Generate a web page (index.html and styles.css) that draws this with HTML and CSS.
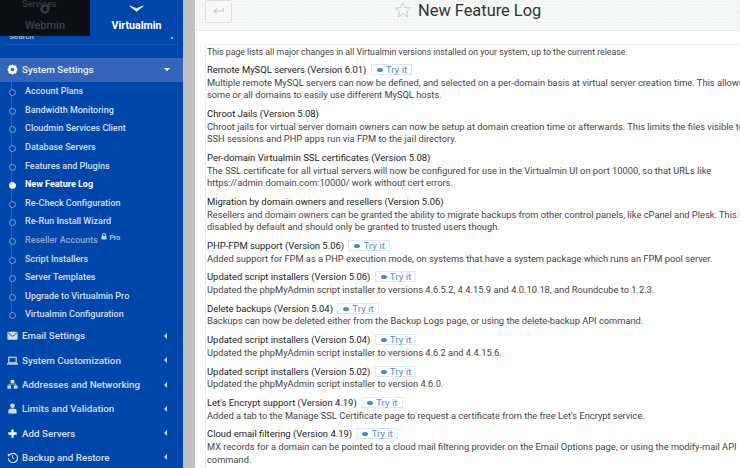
FILE: index.html
```html
<!DOCTYPE html>
<html lang="en">
<head>
<meta charset="utf-8">
<title>New Feature Log</title>
<link rel="stylesheet" href="styles.css">
</head>
<body>
<div class="page">
  <aside class="sidebar">
    <div class="switch">
      <div class="tab tab-webmin">
        <span class="ghost">Services</span>
        <svg class="gear" viewBox="0 0 24 24" width="12" height="12"><circle cx="12" cy="12" r="7" fill="none" stroke="#3a3a3a" stroke-width="5"/></svg>
        <span class="tab-label">Webmin</span>
      </div>
      <div class="tab tab-virtualmin">
        <svg viewBox="0 0 20 10" width="15" height="8"><path d="M1 1 L10 8 L19 1 L10 4.500 Z" fill="#fff" stroke="#fff" stroke-width="1"/></svg>
        <span class="tab-label">Virtualmin</span>
      </div>
    </div>
    <div class="search"><span>Search</span><i class="dot"></i></div>
    <nav class="nav">
      <div class="main active">
        <svg class="mi" viewBox="0 0 24 24"><circle cx="12" cy="12" r="7" fill="none" stroke="#fff" stroke-width="6"/><path d="M12 1v4M12 19v4M1 12h4M19 12h4M4 4l3 3M17 17l3 3M4 20l3-3M17 7l3-3" stroke="#fff" stroke-width="3"/></svg>
        <span class="ml">System Settings</span><i class="caret-down"></i>
      </div>
      <ul class="sub">
        <li>Account Plans</li>
        <li>Bandwidth Monitoring</li>
        <li>Cloudmin Services Client</li>
        <li>Database Servers</li>
        <li>Features and Plugins</li>
        <li class="current">New Feature Log</li>
        <li>Re-Check Configuration</li>
        <li>Re-Run Install Wizard</li>
        <li class="locked">Reseller Accounts <svg class="lock" viewBox="0 0 12 14" width="6" height="7"><path d="M2 6V4a4 4 0 0 1 8 0v2h1v7H1V6zm2 0h4V4a2 2 0 0 0-4 0z" fill="#c6d3ea"/></svg> <sup>Pro</sup></li>
        <li>Script Installers</li>
        <li>Server Templates</li>
        <li>Upgrade to Virtualmin Pro</li>
        <li>Virtualmin Configuration</li>
      </ul>
      <div class="main">
        <svg class="mi" viewBox="0 0 24 24"><rect x="1" y="4" width="22" height="17" rx="2" fill="#d5dff0"/><path d="M2 6l10 8 10-8" fill="none" stroke="#0047ab" stroke-width="2"/></svg>
        <span class="ml">Email Settings</span><i class="caret-left"></i>
      </div>
      <div class="main">
        <svg class="mi" viewBox="0 0 24 24"><rect x="4" y="5" width="16" height="12" fill="none" stroke="#d5dff0" stroke-width="2.500"/><rect x="0" y="18" width="24" height="3" fill="#d5dff0"/></svg>
        <span class="ml">System Customization</span><i class="caret-left"></i>
      </div>
      <div class="main">
        <svg class="mi" viewBox="0 0 24 24"><rect x="8" y="2" width="8" height="7" fill="#d5dff0"/><rect x="1" y="14" width="8" height="7" fill="#d5dff0"/><rect x="15" y="14" width="8" height="7" fill="#d5dff0"/><path d="M5 14v-3h14v3" fill="none" stroke="#d5dff0" stroke-width="1.500"/></svg>
        <span class="ml">Addresses and Networking</span><i class="caret-left"></i>
      </div>
      <div class="main">
        <svg class="mi" viewBox="0 0 24 24"><circle cx="12" cy="6" r="5" fill="#d5dff0"/><path d="M3 23v-6q0-5 9-5t9 5v6z" fill="#d5dff0"/></svg>
        <span class="ml">Limits and Validation</span><i class="caret-left"></i>
      </div>
      <div class="main">
        <svg class="mi" viewBox="0 0 24 24"><path d="M12 3v18M3 12h18" stroke="#fff" stroke-width="5"/></svg>
        <span class="ml">Add Servers</span><i class="caret-left"></i>
      </div>
      <div class="main">
        <svg class="mi" viewBox="0 0 24 24"><path d="M5 7a10 10 0 1 1-2 7" fill="none" stroke="#d5dff0" stroke-width="2.500"/><path d="M1 4l7 1-5 6z" fill="#d5dff0"/><path d="M12 7v6l4 2" fill="none" stroke="#d5dff0" stroke-width="2"/></svg>
        <span class="ml">Backup and Restore</span><i class="caret-left"></i>
      </div>
    </nav>
  </aside>
  <div class="gutter"></div>
  <main class="content">
    <header class="head">
      <button class="back" aria-label="Back">
        <svg viewBox="0 0 14 10" width="11" height="8"><path d="M13 1v4H2M5 2L1.500 5 5 8" fill="none" stroke="#c9c9c9" stroke-width="1.500"/></svg>
      </button>
      <svg class="star" viewBox="0 0 24 24" width="18" height="18"><path d="M12 2l3 6.800 7.300.7-5.500 4.900 1.600 7.200L12 17l-6.400 4.600 1.600-7.200L1.700 9.500 9 8.800z" fill="none" stroke="#c8c8c8" stroke-width="1.300"/></svg>
      <h1>New Feature Log</h1>
    </header>
    <section class="log">
      <p class="intro">This page lists all major changes in all Virtualmin versions installed on your system, up to the current release.</p>
      <div class="e"><div class="t">Remote MySQL servers (Version 6.01) <a class="try"><i class="eye"></i>Try it</a></div>
        <div>Multiple remote MySQL servers can now be defined, and selected on a per-domain basis at virtual server creation time. This allows</div>
        <div>some or all domains to easily use different MySQL hosts.</div></div>
      <div class="e"><div class="t">Chroot Jails (Version 5.08)</div>
        <div>Chroot jails for virtual server domain owners can now be setup at domain creation time or afterwards. This limits the files visible to</div>
        <div>SSH sessions and PHP apps run via FPM to the jail directory.</div></div>
      <div class="e"><div class="t">Per-domain Virtualmin SSL certificates (Version 5.08)</div>
        <div>The SSL certificate for all virtual servers will now be configured for use in the Virtualmin UI on port 10000, so that URLs like</div>
        <div>https://admin.domain.com:10000/ work without cert errors.</div></div>
      <div class="e"><div class="t">Migration by domain owners and resellers (Version 5.06)</div>
        <div>Resellers and domain owners can be granted the ability to migrate backups from other control panels, like cPanel and Plesk. This is</div>
        <div>disabled by default and should only be granted to trusted users though.</div></div>
      <div class="e"><div class="t">PHP-FPM support (Version 5.06) <a class="try"><i class="eye"></i>Try it</a></div>
        <div>Added support for FPM as a PHP execution mode, on systems that have a system package which runs an FPM pool server.</div></div>
      <div class="e"><div class="t">Updated script installers (Version 5.06) <a class="try"><i class="eye"></i>Try it</a></div>
        <div>Updated the phpMyAdmin script installer to versions 4.6.5.2, 4.4.15.9 and 4.0.10.18, and Roundcube to 1.2.3.</div></div>
      <div class="e"><div class="t">Delete backups (Version 5.04) <a class="try"><i class="eye"></i>Try it</a></div>
        <div>Backups can now be deleted either from the Backup Logs page, or using the delete-backup API command.</div></div>
      <div class="e"><div class="t">Updated script installers (Version 5.04) <a class="try"><i class="eye"></i>Try it</a></div>
        <div>Updated the phpMyAdmin script installer to versions 4.6.2 and 4.4.15.6.</div></div>
      <div class="e"><div class="t">Updated script installers (Version 5.02) <a class="try"><i class="eye"></i>Try it</a></div>
        <div>Updated the phpMyAdmin script installer to version 4.6.0.</div></div>
      <div class="e"><div class="t">Let's Encrypt support (Version 4.19) <a class="try"><i class="eye"></i>Try it</a></div>
        <div>Added a tab to the Manage SSL Certificate page to request a certificate from the free Let's Encrypt service.</div></div>
      <div class="e"><div class="t">Cloud email filtering (Version 4.19) <a class="try"><i class="eye"></i>Try it</a></div>
        <div>MX records for a domain can be pointed to a cloud mail filtering provider on the Email Options page, or using the modify-mail API</div>
        <div>command.</div></div>
    </section>
  </main>
</div>
</body>
</html>
```
FILE: styles.css
```css
* { box-sizing: border-box; }
html, body { margin: 0; height: 100%; overflow: hidden; background: #fff; }
body { font-family: Roboto, "Liberation Sans", sans-serif; }
.page { display: flex; width: 740px; height: 468px; overflow: hidden; }

.sidebar { position: relative; width: 183px; flex: none; background: #0047ab; color: #d5dff0; font-size: 9.500px; font-weight: 500; }
.gutter { width: 12px; flex: none; background: #bfc0bf; }

.switch { display: flex; height: 36px; }
.tab { display: flex; flex-direction: column; align-items: center; width: 90px; position: relative; }
.tab-webmin { background: #0c0f14; color: #3e4247; padding-top: 3px; gap: 2px; }
.tab-virtualmin { width: 93px; color: #fff; padding-top: 5px; gap: 6px; font-weight: 700; }
.tab-label { font-size: 10.600px; line-height: 13px; }
.tab-webmin .tab-label { margin-top: 2px; font-weight: 500; font-size: 11px; }
.ghost { position: absolute; left: 22px; top: 0; font-size: 9px; line-height: 9px; color: #33373c; }
.gear { margin-top: 0; position: relative; }

.search { height: 9px; margin: 0 5px; border-bottom: 1px solid #0f5cc0; display: flex; justify-content: space-between; padding: 0 5px 0 4px; font-size: 8px; line-height: 1; color: #aebfdc; overflow: hidden; }
.search span { margin-top: -3px; }
.dot { width: 2px; height: 2px; background: #9db3d8; margin-top: 1px; margin-right: 0; }

.nav { margin-top: 12.500px; }
.main { display: flex; align-items: center; height: 24.300px; padding: 0 15px 0 7px; font-size: 9.800px; color: #d5dff0; }
.main.active { background: #3465b9; color: #e9eef8; padding-right: 13px; }
.mi { width: 11px; height: 11px; flex: none; margin-right: 4px; }
.ml { flex: 1; }
.caret-down { width: 0; height: 0; border: 3px solid transparent; border-top: 3px solid #fff; border-bottom: 0; margin-right: 0; }
.caret-left { width: 0; height: 0; border: 3px solid transparent; border-right: 3px solid #d5dff0; border-left: 0; margin-right: 1px; }

.sub { list-style: none; margin: 0; padding: 0.500px 0 0; position: relative; }
.sub::before { content: ""; position: absolute; left: 11px; top: 0; bottom: 10px; width: 1px; background: #2c63b8; }
.sub li { position: relative; height: 18.580px; line-height: 18.580px; padding-left: 25px; font-size: 9px; white-space: nowrap; }
.sub li::before { content: ""; position: absolute; left: 9px; top: 7px; width: 5px; height: 5px; border-radius: 50%; background: #0047ab; border: 1px solid #7f9fd3; }
.sub li.current { color: #fff; font-weight: 700; }
.sub li.current::before { background: #fff; border-color: #fff; }
.sub li.locked { color: #8ea7d2; }
.lock { margin-left: 1px; vertical-align: 3px; }
.sub sup { font-size: 7px; color: #c6d3ea; line-height: 0; vertical-align: 3px; }

.content { flex: 1; min-width: 0; overflow: hidden; }
.head { height: 31px; display: flex; align-items: center; background-color: #f6f8f8; background-image: radial-gradient(#e8eeee 0.500px, transparent 0.800px); background-size: 3px 3px; border-bottom: 1px solid #e8e8e8; padding-left: 10px; }
.back { width: 27px; height: 23px; margin-top: -8px; display: flex; align-items: center; justify-content: center; padding: 0; background: #f7f7f7; border: 1px solid #dfdde0; border-radius: 2px; }
.star { margin-left: 162px; margin-top: -10px; }
h1 { margin: -8px 0 0 6px; font-size: 16.400px; line-height: 20px; font-weight: 400; color: #2f3336; white-space: nowrap; }

.log { margin: 13px 0 0 10px; width: 600px; border: 1px solid #e3eeee; border-right: 0; padding: 0 0 0 1px; font-size: 9.300px; line-height: 12.600px; color: #444; white-space: nowrap; min-height: 430px; }
.intro { margin: 1px 0 5.200px; line-height: 13px; font-size: 8.720px; }
.e { margin-bottom: 6.200px; }
.t { color: #222; font-size: 9.450px; font-weight: 400; }
.try { display: inline-block; height: 11px; line-height: 10px; margin-left: 2px; padding: 0 4px 0 5px; border: 1px solid #dbe8f6; color: #4d93dc; background: #fff; vertical-align: 0; font-weight: 400; font-size: 9.800px; }
.eye { display: inline-block; width: 6px; height: 4px; margin-right: 3px; vertical-align: 1px; border-radius: 50%; background: #3f8bd8; }
```
